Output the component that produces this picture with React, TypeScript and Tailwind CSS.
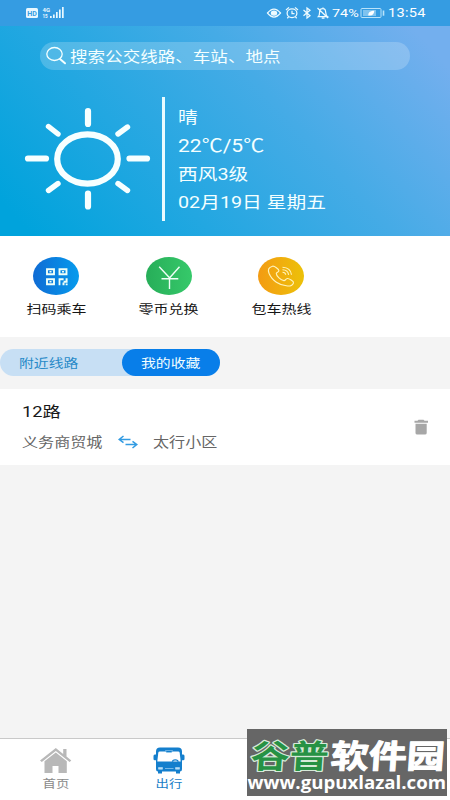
import type { ReactNode } from "react";

function WideText({
  children,
  className = "",
  stretch = "scale-x-[1.219]",
}: {
  children: ReactNode;
  className?: string;
  stretch?: string;
}) {
  return <span className={`block w-max origin-left whitespace-nowrap ${stretch} ${className}`}>{children}</span>;
}

function CenterText({ children, className = "" }: { children: ReactNode; className?: string }) {
  return (
    <span className={`block w-max origin-center scale-x-[1.219] whitespace-nowrap ${className}`}>{children}</span>
  );
}

function StatusBar() {
  return (
    <div className="flex h-[26px] items-center bg-[#359ce2] text-white">
      <svg className="ml-[25px] h-[26px] w-[42px]" viewBox="0 0 42 26" fill="#e9f8ff">
        <rect x="1" y="8" width="12" height="10" rx="1.5" />
        <text x="2.2" y="15.8" fontSize="7.5" fontWeight="700" fill="#359ce2" fontFamily="Roboto, sans-serif" textLength="9.6" lengthAdjust="spacingAndGlyphs">HD</text>
        <text x="17.5" y="12" fontSize="6" fontWeight="700" fontFamily="Roboto, sans-serif">4G</text>
        <text x="17.5" y="18" fontSize="4.5" fontWeight="700" fontFamily="Roboto, sans-serif">15</text>
        <path d="M25 16h1.7v2H25zM28 14.5h1.7V18H28zM31 12h1.7v6H31zM34 9.5h1.7V18H34zM37 7h1.7v11H37z" />
      </svg>
      <svg className="ml-[199px] h-[26px] w-[64px]" viewBox="0 0 64 26" fill="none" stroke="#eefbff" strokeWidth="1.25">
        <path d="M1.5 13q6.5-8 13 0q-6.5 8-13 0z" />
        <ellipse cx="8" cy="13" rx="2.6" ry="2" fill="#eefbff" />
        <ellipse cx="26" cy="13.2" rx="4.9" ry="4.3" />
        <path d="M26 10.7v2.8h2.5M20 10l3-2.6M32 10l-3-2.6M22.5 17l-1.2 1.2M29.5 17l1.2 1.2" />
        <path d="M37.5 10l6.5 5.7-3 2.3V8l3 2.3-6.5 5.4" />
        <path d="M52.5 16.5h8.8c-2-1.3-1.2-5-2.2-6.8-1-1.5-3.7-1.6-5 0-1 1.7.1 5.2-1.6 6.8zM51.5 8l10.5 10M55.7 18h2.8M57 7.5v1.3" />
      </svg>
      <WideText className="ml-[2px] font-['Roboto',sans-serif] text-[11.8px] leading-[26px]">74%</WideText>
      <svg className="ml-[6px] h-[26px] w-[26px]" viewBox="0 0 26 26" fill="none" stroke="#b9e3fa" strokeWidth="1">
        <rect x="1" y="8.5" width="20" height="9" rx="1" />
        <rect x="3" y="10" width="13" height="6" fill="#7fc3ef" stroke="none" />
        <path d="M8.3 15.4c-.3-3.5 2.5-4.5 6-4.7-.3 3.5-2 5.4-6 4.7z" fill="#fff" stroke="none" />
        <path d="M23.5 10.5v5.2" strokeWidth="1.6" />
      </svg>
      <WideText className="ml-[2px] font-['Roboto',sans-serif] text-[12px] leading-[26px] tracking-[0.2px]">13:54</WideText>
    </div>
  );
}

function Weather() {
  return (
    <header className="h-[210px] bg-[linear-gradient(48deg,#00a3dc_5%,#45abe6_62%,#73afee_94%)] pt-[16px] text-[#f4ffff]">
      <div className="ml-[40px] flex h-[28px] w-[370px] items-center rounded-full bg-white/20">
        <svg className="ml-[5px] h-[20px] w-[22px]" viewBox="0 0 22 20" fill="none" stroke="#f4ffff" strokeWidth="1.3" strokeLinecap="round">
          <ellipse cx="9.5" cy="8" rx="7.7" ry="6.5" />
          <path d="M15 13l5 4.3" strokeWidth="2" />
        </svg>
        <WideText className="ml-[3px] text-[14.4px] leading-[28px]">搜索公交线路、车站、地点</WideText>
      </div>
      <div className="mt-[27px] flex h-[124px]">
        <svg className="ml-[24px] h-[124px] w-[128px]" viewBox="0 0 128 124" fill="none" stroke="#f7ffff" strokeLinecap="round">
          <ellipse cx="63.5" cy="62" rx="30.3" ry="24.6" strokeWidth="6.2" />
          <path d="M64 14v13M64 96.5v13M4 61.5h18M105.5 61.5H123" strokeWidth="6.2" />
          <path d="M24.5 29.5l9.5 7.5M94 37l9.5-7M34 86.5l-9.5 7M94 86.5l9.5 7" strokeWidth="5.4" />
        </svg>
        <div className="ml-[10px] w-[3px] bg-[#e9fbff]" />
        <div className="pl-[13px] pt-[8px] font-['Roboto','Noto_Sans_CJK_SC',sans-serif] text-[16.2px]">
          <WideText className="leading-[26px]">晴</WideText>
          <WideText stretch="scale-x-[1.125]" className="text-[18.7px] leading-[30px]">22℃/5℃</WideText>
          <WideText className="leading-[28px]">西风3级</WideText>
          <WideText className="leading-[27px]">02月19日 星期五</WideText>
        </div>
      </div>
    </header>
  );
}

function Shortcut({ label, tone, children }: { label: string; tone: string; children: ReactNode }) {
  return (
    <div className="flex w-[112.5px] flex-col items-center">
      <div className={`h-[38px] w-[46px] rounded-[50%] ${tone}`}>
        <svg className="h-[38px] w-[46px]" viewBox="0 0 46 38" fill="none" stroke="#effff7">{children}</svg>
      </div>
      <CenterText className="mt-[4px] text-[12.3px] leading-[20px] text-[#161616]">{label}</CenterText>
    </div>
  );
}

function Shortcuts() {
  return (
    <section className="flex h-[101px] bg-white pt-[21px]">
      <Shortcut label="扫码乘车" tone="bg-linear-to-r from-[#106bd4] to-[#079bed]">
        <path d="M14 12.2h7v5h-7zM26.5 12.2h7v5h-7zM14 22.2h7v5h-7z" strokeWidth="1.9" />
        <path d="M16.5 13.9h2v1.6h-2zM29 13.9h2v1.6h-2zM16.5 23.9h2v1.6h-2z" fill="#effff7" stroke="none" />
        <path d="M25.6 21.2h5v2h-3.2v5h-1.8zM32.6 21.2h2v4.5h-4v-2h2zM29.5 25.5h2v2.7h-2zM32.7 26.5h1.9v1.7h-1.9z" fill="#effff7" stroke="none" />
      </Shortcut>
      <Shortcut label="零币兑换" tone="bg-linear-to-r from-[#27ae59] to-[#36c96a]">
        <path d="M13.2 9.8l10.3 11M33.5 9.8L23.5 21M15.5 21.7h16.8M23.5 21v11" strokeWidth="1.4" />
      </Shortcut>
      <Shortcut label="包车热线" tone="bg-linear-to-r from-[#f39b12] to-[#ecc108]">
        <g stroke="#fff4bd" strokeWidth="1.15">
          <path d="M14.5 9.2c-4 1.1-4.8 3.5-3.5 7 3 7.4 10.5 12.2 18.5 12.8 3 .2 5.4-1.3 6-3.2.4-1.4-4.6-4.5-6.2-4.3-1.7.2-1.7 2.3-3.4 2.1-3-.3-7.6-4.7-7.6-7.2 0-1.4 2.7-1.1 2.6-2.7 0-1.7-4.6-4.9-6.4-4.5z" />
          <path d="M24.5 10.2c5 .2 8.5 3 9 7.6M24.5 12.8c3.3.1 5.7 2 6.1 5M24.5 15.2c1.8 0 3 1 3.2 2.6" />
        </g>
      </Shortcut>
    </section>
  );
}

function SavedRoute() {
  return (
    <article className="flex h-[76px] items-center bg-white">
      <div className="h-full w-[414px] pl-[22px] pt-[10px]">
        <WideText className="font-['Roboto','Noto_Sans_CJK_SC',sans-serif] text-[15px] leading-[27px] text-[#181818]">12路</WideText>
        <div className="mt-[3px] flex h-[26px] items-center text-[13.2px] text-[#666]">
          <div className="w-[96px]"><WideText>义务商贸城</WideText></div>
          <svg className="h-[14px] w-[20px]" viewBox="0 0 20 14" fill="none" stroke="#329be2" strokeWidth="1.5">
            <path d="M5.5 1L1.2 4.5l4.3 3.2M1.5 4.5h11M14.5 6.3l4.3 3.2-4.3 3.5M7.5 9.5h11" />
          </svg>
          <div className="ml-[15px]"><WideText>太行小区</WideText></div>
        </div>
      </div>
      <svg className="h-[16px] w-[16px]" viewBox="0 0 16 16" fill="#a7a7a7">
        <path d="M4.5.7h5l1 1H14v2H.5v-2h3zM1.5 4.8h11.2V14q0 1.5-1.8 1.5H3.3q-1.8 0-1.8-1.5z" />
      </svg>
    </article>
  );
}

function Watermark() {
  return (
    <div className="absolute left-[247px] top-[729px] h-[67px] w-[200px] bg-[#666]">
      <svg className="h-[67px] w-[200px]" viewBox="0 0 200 67" fontFamily="'Noto Sans CJK SC', sans-serif" fontWeight="700">
        <g transform="translate(3 38.5) skewX(-4)" fontSize="32.5" strokeLinejoin="round" paintOrder="stroke">
          <text x="0" y="0" fill="#269244" stroke="#d6ead9" strokeWidth="2.4" textLength="78" lengthAdjust="spacingAndGlyphs">谷普</text>
          <text x="80" y="0" fill="#fff" stroke="#fff" strokeWidth="1" textLength="114" lengthAdjust="spacingAndGlyphs">软件园</text>
        </g>
        <text x=".5" y="60" fontFamily="'Open Sans', sans-serif" fontWeight="700" fontSize="18" fill="#fff" textLength="198.5" lengthAdjust="spacingAndGlyphs">www.gupuxlazal.com</text>
      </svg>
    </div>
  );
}

function TabBar() {
  return (
    <nav className="flex h-[62px] border-t border-[#c9c9c9] bg-white pt-[8px] text-[11px]">
      <div className="flex w-[112px] flex-col items-center text-[#8a8a8a]">
        <svg className="h-[27px] w-[32px]" viewBox="0 0 32 27" fill="#b8b8b8">
          <path d="M15.8 1L0 13.5l1.8 1.4L15.8 4l13.8 10.9 1.7-1.4-4.8-4V2h-3.3v5z" />
          <path d="M15.8 5.5L4.5 14.3V26h8v-7h6v7h8.3V14.3z" />
        </svg>
        <CenterText className="leading-[18px]">首页</CenterText>
      </div>
      <div className="flex w-[113px] flex-col items-center text-[#1b80c7]">
        <svg className="h-[27px] w-[32px]" viewBox="0 0 32 27" fill="#147fcd">
          <path d="M7 .5h18q4 0 4 4v3h1.3q1.2 0 1.2 1.5v3q0 1.2-1.3 1.2H29v9q0 2.3-2 2.3V26.5h-4v-2H9v2H5v-2q-2 0-2-2.3v-9H1.8Q.5 13.2.5 12V9q0-1.5 1.3-1.5H3v-3q0-4 4-4z" />
          <path d="M5.3 5.7q.2-1.2 1.5-1.2h18.4q1.3 0 1.5 1.2l1 8.8H4.3z" fill="white" />
          <path d="M12.5 3.5h7v.5q-.4 1.5-1.8 1.5h-3.4q-1.4 0-1.8-1.5z" stroke="#9ed0f2" strokeWidth=".6" />
          <path d="M19.5 14.8q0-2 2.8-2t2.8 2" fill="none" stroke="#147fcd" strokeWidth="1.3" />
          <path d="M5.5 20.5h4v1.7h-4zM22.5 20.5h4v1.7h-4zM12 21.5h8.5" fill="#b9def6" stroke="#b9def6" strokeWidth=".6" />
        </svg>
        <CenterText className="leading-[18px]">出行</CenterText>
      </div>
    </nav>
  );
}

export default function App() {
  return (
    <main className="relative flex h-[800px] w-[450px] flex-col overflow-hidden bg-[#f4f4f4] font-['Noto_Sans_CJK_SC',sans-serif]">
      <StatusBar />
      <Weather />
      <Shortcuts />
      <section className="h-[52px] pt-[12px]">
        <div className="flex h-[27px] w-[220px] rounded-full bg-[#c7dff4] text-[12.2px] leading-[28px]">
          <div className="w-[122px] pl-[19px] text-[#278ac8]"><WideText>附近线路</WideText></div>
          <div className="w-[98px] rounded-full bg-[#087ee9] pl-[19px] text-[#f3ffff]"><WideText>我的收藏</WideText></div>
        </div>
      </section>
      <SavedRoute />
      <div className="flex-1" />
      <TabBar />
      <Watermark />
    </main>
  );
}
